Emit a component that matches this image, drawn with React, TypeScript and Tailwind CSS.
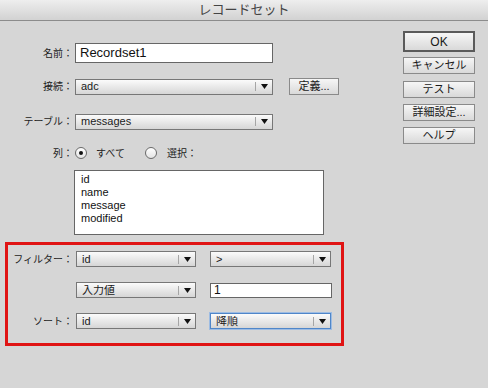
import type { ReactNode } from 'react';

const jp = { fontFamily: '"Liberation Sans", "Noto Sans CJK JP", sans-serif' };

function Label({ children, className = '' }: { children: ReactNode; className?: string }) {
  return (
    <div className={`flex shrink-0 justify-end whitespace-nowrap text-[10px] text-[#222] ${className}`}>
      <span>{children}</span>
    </div>
  );
}

function Select({ value, width, focused = false }: { value: string; width: string; focused?: boolean }) {
  return (
    <div
      className={`${width} flex h-[16px] items-center border bg-linear-to-b from-[#fbfbfb] to-[#d6d6d6] ${
        focused ? 'border-[#4f86c9] shadow-[0_0_0_1px_#9dbce3]' : 'border-[#777]'
      }`}
    >
      <span className="flex-1 truncate pl-[5px] text-[11px] leading-none text-[#1a1a1a]">{value}</span>
      <span className="h-[9px] w-px bg-[#a5a5a5]" />
      <span className="flex w-[16px] justify-center">
        <svg width="7" height="5" viewBox="0 0 7 5">
          <path d="M0 0h7L3.5 5z" fill="#111" />
        </svg>
      </span>
    </div>
  );
}

function Button({ children, isDefault = false, className = '' }: { children: ReactNode; isDefault?: boolean; className?: string }) {
  return (
    <div
      className={`flex items-center justify-center bg-linear-to-b from-[#f6f6f6] to-[#d9d9d9] text-[11px] text-[#1a1a1a] ${
        isDefault ? 'h-[21px] border-2 border-[#5a5a5a]' : 'h-[17px] border border-[#8a8a8a]'
      } ${className}`}
    >
      {children}
    </div>
  );
}

function Radio({ checked }: { checked: boolean }) {
  return (
    <span className="flex h-[12px] w-[12px] items-center justify-center rounded-full border border-[#6a6a6a] bg-linear-to-b from-[#ffffff] to-[#e4e4e4]">
      {checked && <span className="h-[4px] w-[4px] rounded-full bg-[#111]" />}
    </span>
  );
}

export default function App() {
  return (
    <div className="h-[388px] w-[488px] overflow-hidden bg-[#d6d6d6]" style={jp}>
      <div className="flex h-[21px] items-center justify-center border-b border-[#8c8c8c] bg-linear-to-b from-[#eeeeee] to-[#d2d2d2] text-[13px] text-[#444]">
        レコードセット
      </div>

      <div className="flex">
        <div className="w-[346px]">
          <div className="mt-[22px] flex h-[20px] items-center">
            <Label className="w-[73px]">名前：</Label>
            <div className="ml-[2px] flex h-[20px] w-[198px] items-center border border-[#666] bg-white pl-[4px] text-[13px] text-[#111]">
              Recordset1
            </div>
          </div>

          <div className="mt-[15px] flex h-[17px] items-center">
            <Label className="w-[73px]">接続：</Label>
            <div className="ml-[2px]">
              <Select value="adc" width="w-[198px]" />
            </div>
            <Button className="ml-[16px] w-[50px]">定義...</Button>
          </div>

          <div className="mt-[18px] flex h-[17px] items-center">
            <Label className="w-[73px]">テーブル：</Label>
            <div className="ml-[2px]">
              <Select value="messages" width="w-[198px]" />
            </div>
          </div>

          <div className="mt-[15px] flex h-[16px] items-center text-[10px] text-[#222]">
            <Label className="w-[73px]">列：</Label>
            <span className="ml-[2px]">
              <Radio checked />
            </span>
            <span className="ml-[9px]">すべて</span>
            <span className="ml-[20px]">
              <Radio checked={false} />
            </span>
            <span className="ml-[10px]">選択：</span>
          </div>

          <div className="ml-[74px] mt-[9px] h-[65px] w-[250px] border border-[#666] bg-white pl-[6px] pt-[2px] text-[11px] leading-[13px] text-[#111]">
            <div>id</div>
            <div>name</div>
            <div>message</div>
            <div>modified</div>
          </div>

          <div className="ml-[5px] mt-[7px] h-[104px] w-[339px] border-[3px] border-[#e01414] pt-[6px]">
            <div className="flex h-[16px] items-center">
              <Label className="w-[65px]">フィルター：</Label>
              <div className="ml-[3px]">
                <Select value="id" width="w-[120px]" />
              </div>
              <div className="ml-[14px]">
                <Select value=">" width="w-[121px]" />
              </div>
            </div>

            <div className="mt-[15px] flex h-[16px] items-center">
              <div className="ml-[68px]">
                <Select value="入力値" width="w-[120px]" />
              </div>
              <div className="ml-[14px] flex h-[15px] w-[122px] items-center border border-[#666] bg-white pl-[3px] text-[12px] text-[#111]">
                1
              </div>
            </div>

            <div className="mt-[15px] flex h-[16px] items-center">
              <Label className="w-[65px]">ソート：</Label>
              <div className="ml-[3px]">
                <Select value="id" width="w-[120px]" />
              </div>
              <div className="ml-[14px]">
                <Select value="降順" width="w-[121px]" focused />
              </div>
            </div>
          </div>
        </div>

        <div className="ml-[57px] flex w-[72px] flex-col pt-[10px]">
          <Button isDefault className="text-[12px]">OK</Button>
          <Button className="mt-[5px]">キャンセル</Button>
          <Button className="mt-[7px]">テスト</Button>
          <Button className="mt-[6px]">詳細設定...</Button>
          <Button className="mt-[6px]">ヘルプ</Button>
        </div>
      </div>
    </div>
  );
}
